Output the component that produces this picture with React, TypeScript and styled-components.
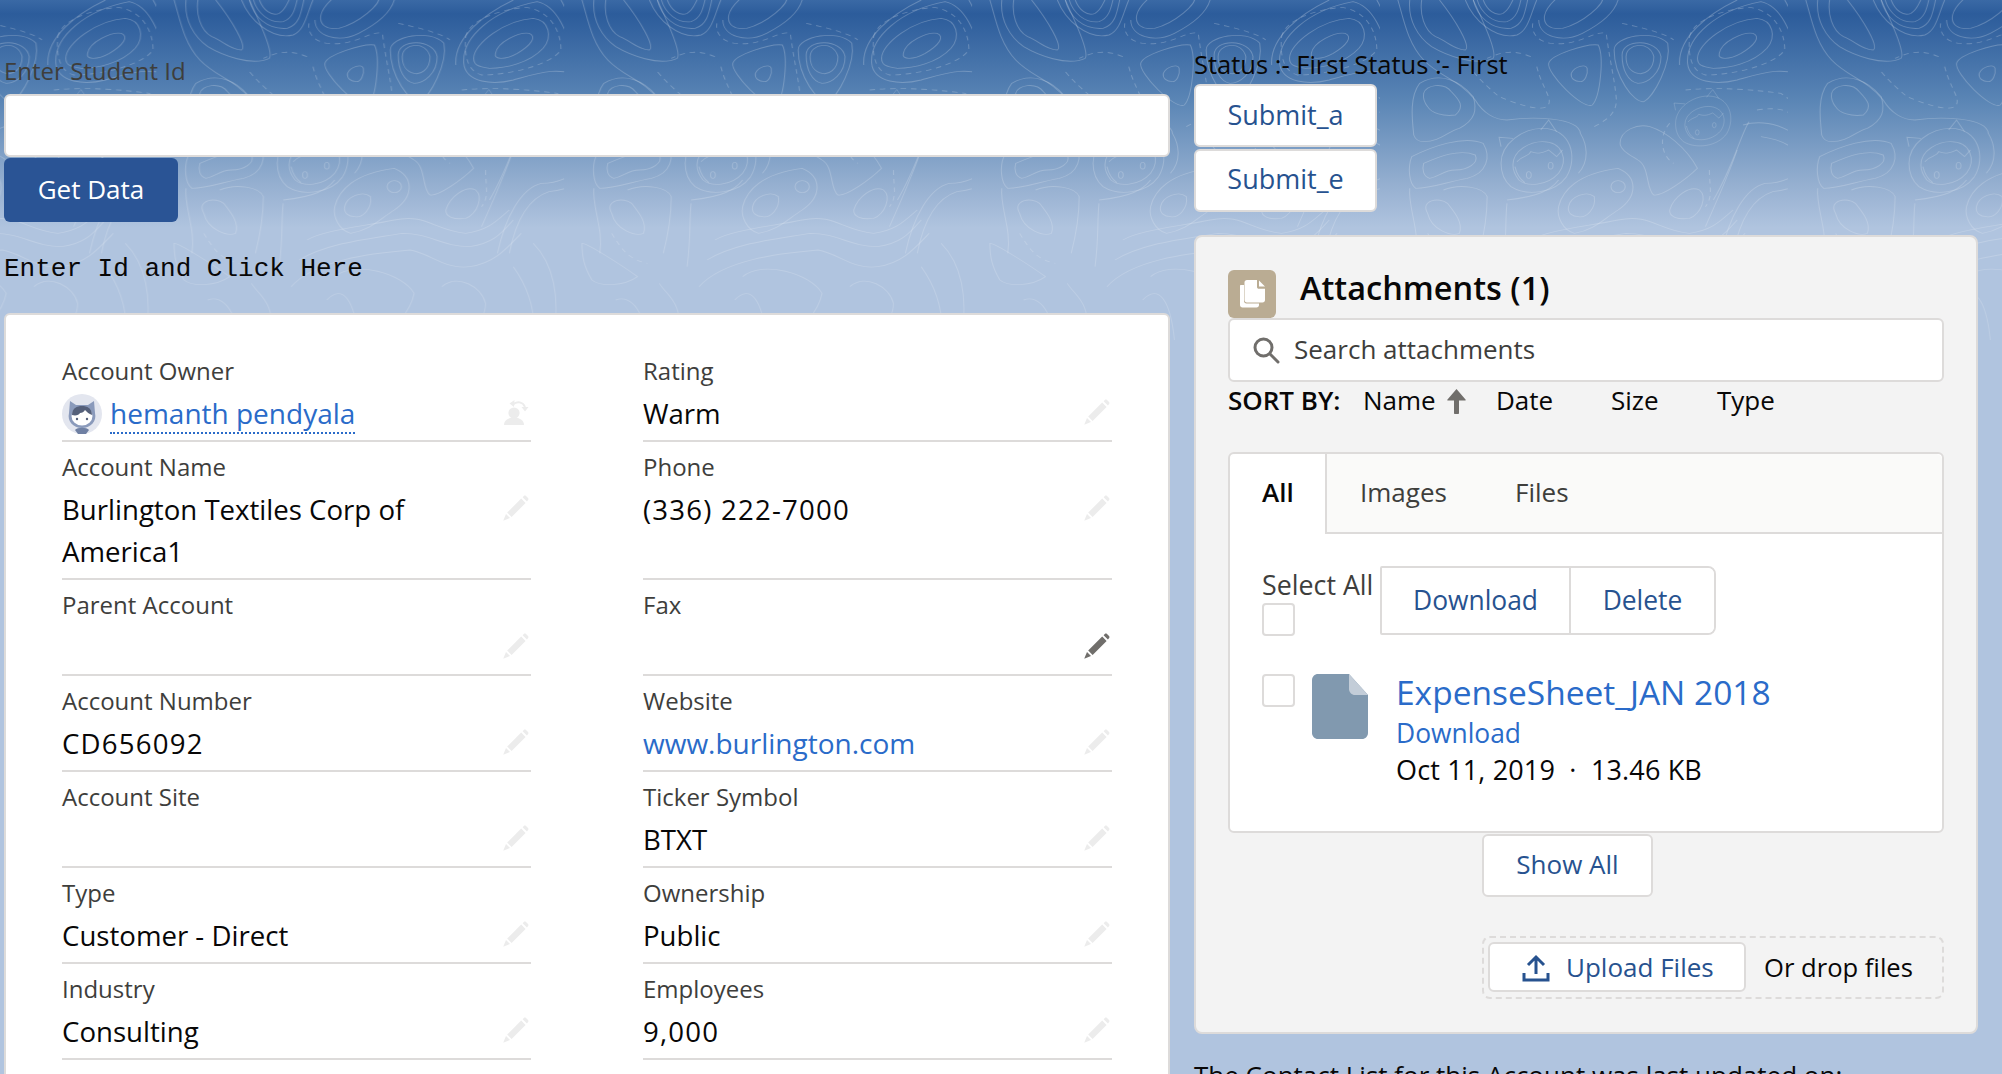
import React from "react";
import styled, { createGlobalStyle } from "styled-components";

const Global = createGlobalStyle`
  html, body { margin: 0; padding: 0; height: 100%; overflow: hidden; background: #b0c4df; }
  body { font-family: "Open Sans", "Noto Sans", sans-serif; color: #080707; }
  * { box-sizing: border-box; }
`;

const Page = styled.div`
  position: relative;
  height: 1074px;
  overflow: hidden;
  background: linear-gradient(#3a69a5 0, #2c5c9b 14px, #5a85b5 100px, #95afd0 184px, #b0c4df 228px);
`;
const Contours = styled.svg`
  position: absolute;
  left: 0;
  top: 0;
  width: 2002px;
  height: 340px;
`;
const Columns = styled.div`
  position: relative;
  display: grid;
  grid-template-columns: 1166px 784px;
  column-gap: 24px;
  padding-left: 4px;
`;
const LeftColumn = styled.section`
  padding-top: 54px;
`;
const RightColumn = styled.section`
  padding-top: 46px;
`;
const FieldLabel = styled.label`
  display: block;
  font-size: 24px;
  line-height: 34px;
  height: 40px;
  color: #3e3e3c;
`;
const TextInput = styled.input`
  display: block;
  width: 100%;
  height: 63px;
  background: #fff;
  border: 2px solid #dddbda;
  border-radius: 6px;
  outline: none;
`;
const BrandButton = styled.button`
  display: block;
  width: 174px;
  height: 64px;
  margin-top: 1px;
  border: 0;
  border-radius: 6px;
  background: #2a5495;
  color: #fff;
  font: 500 26px "Open Sans", sans-serif;
  padding: 0 0 2px;
`;
const MonoNote = styled.div`
  font-family: "Liberation Mono", monospace;
  font-size: 26px;
  line-height: 30px;
  margin-top: 32px;
  color: #080707;
`;
const RecordCard = styled.div`
  margin-top: 29px;
  height: 900px;
  background: #fff;
  border: 2px solid #dddbda;
  border-radius: 6px;
  padding: 31px 0 0 56px;
  display: grid;
  grid-template-columns: 469px 469px;
  column-gap: 112px;
  align-content: start;
`;
const Field = styled.div`
  padding-top: 10px;
  border-bottom: 2px solid #dddbda;
  padding-bottom: 6px;
`;
const Caption = styled.div`
  font-size: 24px;
  line-height: 30px;
  height: 36px;
  color: #3e3e3c;
`;
const ValueRow = styled.div`
  display: flex;
  justify-content: space-between;
  align-items: flex-start;
  min-height: 42px;
  padding-right: 2px;
`;
const Value = styled.div<{ $track?: boolean }>`
  font-size: 27.6px;
  line-height: 42px;
  color: #080707;
  max-width: 420px;
  letter-spacing: ${p => (p.$track ? "1.2px" : "normal")};
`;
const Link = styled.a`
  color: #2a6bc9;
  font-size: 28px;
  line-height: 42px;
`;
const OwnerCell = styled.div`
  display: flex;
  align-items: center;
  gap: 8px;
  height: 40px;
  margin-top: 2px;
`;
const OwnerLink = styled.a`
  color: #2a6bc9;
  font-size: 28px;
  line-height: 37px;
  border-bottom: 2px dotted #2a6bc9;
`;
const EditIcon = styled.svg<{ $active?: boolean }>`
  width: 26px;
  height: 26px;
  margin-top: 7px;
  flex: none;
  fill: ${p => (p.$active ? "#706e6b" : "#ececec")};
`;
const StatusLine = styled.div`
  font-size: 25.5px;
  line-height: 36px;
  height: 38px;
  color: #080707;
`;
const NeutralButton = styled.button`
  display: block;
  background: #fff;
  border: 2px solid #dddbda;
  border-radius: 6px;
  color: #27528f;
  font: 400 26px "Open Sans", sans-serif;
  padding: 0;
`;
const SubmitButton = styled(NeutralButton)`
  width: 183px;
  height: 63px;
  margin-bottom: 1.5px;
  font-size: 27px;
  padding-bottom: 3px;
`;
const Panel = styled.div`
  margin-top: 23px;
  height: 799px;
  background: #f3f3f3;
  border: 2px solid #dddbda;
  border-radius: 8px;
  padding: 33px 32px 0 32px;
  display: flex;
  flex-direction: column;
`;
const PanelHeader = styled.header`
  display: flex;
  height: 48px;
  gap: 24px;
`;
const HeaderIcon = styled.svg`
  width: 48px;
  height: 48px;
  flex: none;
`;
const PanelTitle = styled.h2`
  margin: 0;
  font-size: 32.5px;
  font-weight: 600;
  line-height: 36px;
  color: #080707;
`;
const SearchBox = styled.div`
  height: 64px;
  background: #fff;
  border: 2px solid #dddbda;
  border-radius: 6px;
  display: flex;
  align-items: center;
  padding-left: 22px;
  gap: 14px;
`;
const SearchText = styled.span`
  font-size: 26px;
  color: #3e3e3c;
  position: relative;
  top: -1px;
`;
const SortBar = styled.div`
  height: 39px;
  padding-bottom: 3px;
  display: flex;
  align-items: center;
  font-size: 26px;
  color: #080707;
`;
const SortTitle = styled.span`
  font-weight: 600;
  width: 135px;
`;
const SortItem = styled.span<{ $w: number }>`
  display: flex;
  align-items: center;
  width: ${p => p.$w}px;
`;
const SortArrow = styled.svg`
  width: 19px;
  height: 25px;
  margin-left: 11px;
  margin-top: 4px;
`;
const TabsCard = styled.div`
  margin-top: 31px;
  background: #fff;
  border: 2px solid #dddbda;
  border-radius: 6px;
`;
const TabBar = styled.div`
  display: flex;
  height: 80px;
  background: #fafaf9;
  border-bottom: 2px solid #dddbda;
  border-radius: 6px 6px 0 0;
  font-size: 26px;
`;
const Tab = styled.div<{ $active?: boolean; $w: number; $pad: number }>`
  width: ${p => p.$w}px;
  padding-left: ${p => p.$pad}px;
  line-height: 77px;
  color: ${p => (p.$active ? "#080707" : "#3e3e3c")};
  font-weight: ${p => (p.$active ? 600 : 400)};
  ${p => p.$active && "background:#fff;border-right:2px solid #dddbda;height:80px;border-radius:6px 0 0 0;"}
`;
const TabBody = styled.div`
  padding: 32px 0 42px 32px;
`;
const BulkRow = styled.div`
  display: flex;
  align-items: flex-start;
  gap: 5px;
`;
const SelectAll = styled.div`
  width: 113px;
  font-size: 26.8px;
  line-height: 37px;
  color: #3e3e3c;
  white-space: nowrap;
`;
const Check = styled.input.attrs({ type: "checkbox" })`
  appearance: none;
  display: block;
  margin: 0;
  width: 33px;
  height: 33px;
  background: #fff;
  border: 2px solid #dddbda;
  border-radius: 4px;
  flex: none;
`;
const ButtonGroup = styled.div`
  display: flex;
  height: 69px;
  border: 2px solid #dddbda;
  border-radius: 2px 8px 8px 2px;
`;
const GroupButton = styled.button<{ $w: number }>`
  width: ${p => p.$w}px;
  border: 0;
  background: #fff;
  color: #27528f;
  font: 400 26.4px "Open Sans", sans-serif;
  border-radius: 6px;
  padding: 0;
`;
const GroupDivider = styled.span`
  width: 2px;
  background: #dddbda;
`;
const FileRow = styled.div`
  display: flex;
  align-items: flex-start;
  margin-top: 38px;
`;
const DocIcon = styled.svg`
  width: 56px;
  height: 65px;
  flex: none;
  margin: 0 28px 0 17px;
`;
const FileTitle = styled.a`
  display: block;
  font-size: 33.5px;
  line-height: 37px;
  color: #2a6bc9;
`;
const FileDownload = styled.a`
  display: block;
  font-size: 26.4px;
  line-height: 36px;
  margin-top: 4px;
  color: #2a6bc9;
`;
const FileMeta = styled.div`
  font-size: 27px;
  line-height: 38px;
  color: #080707;
  letter-spacing: 0.15px;
`;
const BottomActions = styled.div`
  width: 462px;
  margin: 1px 0 0 auto;
`;
const ShowAllButton = styled(NeutralButton)`
  width: 171px;
  height: 63px;
  padding-bottom: 2px;
`;
const DropZone = styled.div`
  margin-top: 39px;
  height: 63px;
  border: 2px dashed #dddbda;
  border-radius: 8px;
  display: flex;
  align-items: center;
  padding-left: 4px;
  gap: 18px;
  font-size: 25.6px;
  color: #080707;
`;
const UploadButton = styled(NeutralButton)`
  width: 258px;
  height: 50px;
  display: flex;
  align-items: center;
  padding-left: 32px;
  gap: 16px;
`;
const UploadIcon = styled.svg`
  width: 28px;
  height: 28px;
  flex: none;
  margin-top: 2px;
`;
const UpdatedNote = styled.div`
  margin-top: 23px;
  font-size: 26px;
  line-height: 36px;
  color: #080707;
  white-space: nowrap;
`;

const Pencil = ({ active }: { active?: boolean }) => (
  <EditIcon viewBox="0 0 26 26" $active={active}>
    <path d="M18.2 3.6 22.6 8 8.6 22 4.2 17.6Z" />
    <path d="M19.6 2.2 20.8 1c.7-.6 1.6-.6 2.2 0l2 2c.6.6.6 1.5 0 2.2L23.9 6.6Z" />
    <path d="M3 19 7 23 .8 25.6c-.3.1-.5-.1-.4-.4Z" />
  </EditIcon>
);

const OwnerChange = () => (
  <EditIcon viewBox="0 0 26 26" fill="#ececec">
    <circle cx="11" cy="14" r="5.6" />
    <path d="M1 26c0-4.5 3.5-6 6-7h8c2.500 1 6 2.500 6 7Z" />
    <path d="M10 5.500C14 1.500 20 3 22 8" fill="none" stroke="#ececec" strokeWidth="2" />
    <path d="M11.500 1 11 8 6.500 4.500ZM18.500 8h7L22 12.500Z" />
  </EditIcon>
);

const Avatar = () => (
  <svg width="40" height="40" viewBox="0 0 40 40">
    <circle cx="20" cy="20" r="20" fill="#e3e6ef" />
    <path d="M8 7l6 4h12l6-4 1 12c2 8-4 15-13 15S5 27 7 19Z" fill="#8a9abb" />
    <path d="M13 36c2-3 12-3 14 0l-3 4h-8Z" fill="#6f80a3" />
    <ellipse cx="20" cy="22" rx="10.500" ry="9.500" fill="#fff" />
    <path d="M10 21c0-7 5-9 10-9s10 2 10 9c-3-1-5-3-7-5-1 2-3 3-5 3-1 2-4 3-8 2Z" fill="#55607a" />
    <circle cx="15" cy="25" r="1.200" fill="#55607a" />
    <circle cx="25" cy="25" r="1.200" fill="#55607a" />
  </svg>
);

const Mascot = ({ x, y, s }: { x: number; y: number; s: number }) => (
  <g transform={`translate(${x} ${y}) scale(${s})`}>
    <path d="M-90 0C-90-60-35-105 15-105C85-105 105-20 75 40C45 90-25 100-65 70C-85 50-90 25-90 0Z" />
    <path d="M-60 5C-60-40-15-65 15-65C65-65 80-10 55 30C25 70-25 70-45 50C-55 35-60 20-60 5Z" />
    <path d="M10-100L30-130L50-95M-90-50L-95-78L-60-75" />
    <path d="M-50-5C-35-25-20-20-15-35C5-25 20-35 30-40L50-20L65-40" />
    <path d="M-55 10C-50 35-40 50-30 58" />
    <ellipse cx="-20" cy="35" rx="6" ry="10" />
    <ellipse cx="35" cy="7" rx="6" ry="10" />
  </g>
);

const Topography = () => (
  <Contours viewBox="0 0 2002 340">
    <defs>
      <linearGradient id="fadeGrad" x1="0" y1="0" x2="0" y2="1">
        <stop offset="0" stopColor="#fff" stopOpacity="0.8" />
        <stop offset="1" stopColor="#fff" stopOpacity="0.55" />
      </linearGradient>
      <mask id="fade">
        <rect width="2002" height="340" fill="url(#fadeGrad)" />
      </mask>
      <pattern id="topo" patternUnits="userSpaceOnUse" width="1028" height="1020" patternTransform="translate(1380 0) scale(0.3968 0.3333)">
        <g fill="none" stroke="#fff" strokeOpacity="0.3" strokeWidth="2.6">
          <path d="M855 160C860 125 915 95 940 100C960 110 945 135 910 160C880 180 850 180 855 160Z" />
          <path d="M800 175C800 130 880 60 950 55C990 60 1000 110 975 145C940 190 880 205 840 205C810 200 800 195 800 175Z" />
          <path d="M775 190C770 110 850 30 960 5C1020 20 1040 120 1075 235C1020 195 960 220 900 240C850 255 780 250 775 190Z" />
          <path d="M755 195C750 110 830 40 900 0M1020 0C1050 60 1060 140 1100 210C1130 250 1190 290 1230 320" />
          <path d="M620 170C620 130 680 120 690 170C690 210 665 225 650 220C630 215 620 195 620 170Z" />
          <path d="M610 165C610 115 700 115 708 170C708 220 675 250 650 250C625 245 610 210 610 165Z" />
          <path d="M590 150C590 110 690 85 725 130C735 190 690 290 665 305C640 310 590 230 590 150Z" />
          <path d="M425 190C430 165 520 130 550 135C565 170 555 290 535 315C510 330 420 220 425 190Z" />
          <path d="M482 220C490 200 520 190 522 205C525 225 515 245 505 245C490 245 480 235 482 220Z" />
          <path d="M260 0C270 30 290 50 310 40C325 30 330 10 335 0" />
          <path d="M245 0C255 40 285 70 320 65C345 55 350 25 355 0" />
          <path d="M235 0C245 50 280 90 330 85C360 75 365 40 372 0" />
          <path d="M215 0C235 60 290 120 345 105C375 90 380 40 395 0" />
          <path d="M415 45C420 20 440 0 450-10L560-10C570 10 510 70 460 85C430 90 410 75 415 45Z" />
          <path d="M400 60C400 110 460 130 510 100C560 70 590 40 600 0" />
          <path d="M105 0C100 40 110 90 140 110C170 125 190 150 215 150C230 140 190 60 150 0" />
          <path d="M75 0C70 60 95 110 130 140C165 165 240 200 285 175C295 160 270 90 235 0" />
          <path d="M45 0C60 60 70 130 110 180C150 230 200 240 240 300C260 340 290 360 320 360C380 350 500 350 505 400C520 430 530 480 500 520" />
          <path d="M110 280C115 255 160 245 180 275C200 300 215 320 190 345C160 350 130 340 120 320C110 305 108 295 110 280Z" />
          <path d="M85 405C80 350 75 290 100 250C150 215 200 240 235 290C245 330 240 360 200 385C170 395 150 425 110 425C95 425 88 415 85 405Z" />
          <path d="M605 430C605 390 650 370 680 380C720 395 770 440 800 505C770 540 710 590 690 585C670 570 680 500 650 480C630 465 605 450 605 430Z" />
          <path d="M110 490C150 470 200 445 240 465C250 490 220 510 190 510C160 510 150 530 125 535C110 530 105 510 110 490Z" />
          <path d="M80 470C130 440 210 405 260 430C280 470 270 520 220 535C170 545 130 565 90 565C72 550 70 500 80 470Z" />
          <path d="M960 410C1020 420 1060 450 1060 490C1060 530 1010 550 970 550C920 565 880 650 860 760" />
          <path d="M915 375C1000 345 1090 420 1088 490C1090 540 1040 570 990 575C950 590 910 640 890 760" />
          <path d="M900 450C880 520 850 600 820 680" />
          <path d="M930 365C910 400 890 500 840 600" />
          <circle cx="600" cy="560" r="18" />
          <path d="M475 620C480 590 520 570 540 590C545 625 520 655 500 650C485 650 472 640 475 620Z" />
          <path d="M450 620C460 570 500 520 600 505C650 530 650 590 600 630C560 660 540 690 490 700C460 690 445 650 450 620Z" />
          <path d="M730 630C740 590 780 555 805 570C825 590 810 640 780 655C750 660 728 650 730 630Z" />
          <path d="M120 640C100 600 150 590 170 610C190 640 210 670 200 700C180 710 130 690 120 640Z" />
          <path d="M160 570C200 550 260 560 270 590C270 640 265 690 250 760" />
          <path d="M75 565C70 620 100 690 90 760M320 600C400 590 430 570 450 540M320 610C315 660 320 710 310 800" />
          <path d="M45 730C60 730 150 800 185 830C150 860 90 860 70 840C50 800 45 770 45 730Z" />
          <path d="M380 720C420 690 520 680 600 660C680 640 700 690 780 700C840 690 860 660 890 630" />
          <path d="M360 780C430 730 520 720 620 700C690 700 720 740 790 740C850 730 870 700 900 660" />
          <path d="M340 860C400 780 540 760 640 750C690 760 730 810 790 800C850 790 880 750 920 700" />
          <path d="M950 730C1000 790 1020 890 1000 1020M900 800C930 850 960 920 950 1020" />
          <path d="M450 830C500 780 620 820 650 880C640 940 600 980 560 1020M430 900C470 850 500 900 510 1020" />
          <path d="M720 860C760 820 820 860 830 910C830 960 800 980 780 1020M240 850C260 890 300 900 290 1020M130 900C170 880 210 950 200 1020" />
          <path d="M380 170C330 145 300 160 270 175M395 200C410 270 440 300 420 320C400 335 340 310 300 290C280 270 260 250 235 215M730 370C700 410 710 470 740 490M540 380C570 360 600 340 595 290C590 230 580 190 570 100C540 90 500 140 430 130C400 125 380 100 385 70M950 330C1000 320 1040 330 1040 360M770 270C850 260 950 270 1010 280C1050 310 1060 340 1050 370M610 70C650 80 720 100 740 120M830 510C830 560 840 590 820 620M120 700C150 760 170 780 210 790" strokeDasharray="14 12" />
          <path d="M780 110C790 60 860 30 930 22C990 30 1020 90 1020 150C990 200 880 225 820 225C790 215 775 180 780 110Z" strokeDasharray="14 12" />
          <Mascot x={395} y={490} s={1} />
          <Mascot x={815} y={370} s={0.78} />
        </g>
      </pattern>
    </defs>
    <rect width="2002" height="340" fill="url(#topo)" mask="url(#fade)" />
  </Contours>
);

type Row = { label: string; value?: string; link?: string; active?: boolean; track?: boolean };
const left: Row[] = [
  { label: "Account Name", value: "Burlington Textiles Corp of America1" },
  { label: "Parent Account" },
  { label: "Account Number", value: "CD656092", track: true },
  { label: "Account Site" },
  { label: "Type", value: "Customer - Direct" },
  { label: "Industry", value: "Consulting" },
];
const right: Row[] = [
  { label: "Phone", value: "(336) 222-7000", track: true },
  { label: "Fax", active: true },
  { label: "Website", link: "www.burlington.com" },
  { label: "Ticker Symbol", value: "BTXT" },
  { label: "Ownership", value: "Public" },
  { label: "Employees", value: "9,000", track: true },
];

const Cell = ({ row }: { row: Row }) => (
  <Field>
    <Caption>{row.label}</Caption>
    <ValueRow>
      {row.link ? <Link>{row.link}</Link> : <Value $track={row.track}>{row.value}</Value>}
      <Pencil active={row.active} />
    </ValueRow>
  </Field>
);

export default function App() {
  return (
    <Page>
      <Global />
      <Topography />
      <Columns>
        <LeftColumn>
          <FieldLabel>Enter Student Id</FieldLabel>
          <TextInput />
          <BrandButton>Get Data</BrandButton>
          <MonoNote>Enter Id and Click Here</MonoNote>
          <RecordCard>
            <Field>
              <Caption>Account Owner</Caption>
              <ValueRow>
                <OwnerCell>
                  <Avatar />
                  <OwnerLink>hemanth pendyala</OwnerLink>
                </OwnerCell>
                <OwnerChange />
              </ValueRow>
            </Field>
            <Field>
              <Caption>Rating</Caption>
              <ValueRow>
                <Value>Warm</Value>
                <Pencil />
              </ValueRow>
            </Field>
            {left.map((row, i) => (
              <React.Fragment key={row.label}>
                <Cell row={row} />
                <Cell row={right[i]} />
              </React.Fragment>
            ))}
          </RecordCard>
        </LeftColumn>
        <RightColumn>
          <StatusLine>Status :- First Status :- First</StatusLine>
          <SubmitButton>Submit_a</SubmitButton>
          <SubmitButton>Submit_e</SubmitButton>
          <Panel>
            <PanelHeader>
              <HeaderIcon viewBox="0 0 48 48">
                <rect width="48" height="48" rx="6" fill="#baac93" />
                <path d="M13 15h3v16c0 1.500 1 2.500 2.500 2.500H31v1.500c0 1.500-1 2.500-2.500 2.500h-14c-1.500 0-2.500-1-2.500-2.500V16c0-.6.400-1 1-1Z" fill="#fff" />
                <path d="M19 10h10v7c0 1 .8 1.800 1.800 1.800H37V30c0 1.500-1 2.500-2.500 2.500H19c-1.500 0-2.500-1-2.500-2.500V12.500C16.500 11 17.500 10 19 10ZM31 10.500l6 6h-6Z" fill="#fff" />
              </HeaderIcon>
              <PanelTitle>Attachments (1)</PanelTitle>
            </PanelHeader>
            <SearchBox>
              <svg width="28" height="28" viewBox="0 0 28 28" fill="none" stroke="#706e6b" strokeWidth="3" strokeLinecap="round">
                <circle cx="11.500" cy="11.500" r="8.500" />
                <path d="M18 18l8 8" />
              </svg>
              <SearchText>Search attachments</SearchText>
            </SearchBox>
            <SortBar>
              <SortTitle>SORT BY:</SortTitle>
              <SortItem $w={133}>
                Name
                <SortArrow viewBox="0 0 19 25" fill="#706e6b">
                  <path d="M9.500 0 18.500 10.500C19 11 18.700 11.500 18 11.500H12V24c0 .6-.4 1-1 1H8c-.6 0-1-.4-1-1V11.500H1c-.7 0-1-.5-.5-1Z" />
                </SortArrow>
              </SortItem>
              <SortItem $w={115}>Date</SortItem>
              <SortItem $w={106}>Size</SortItem>
              <SortItem $w={80}>Type</SortItem>
            </SortBar>
            <TabsCard>
              <TabBar>
                <Tab $active $w={97} $pad={32}>All</Tab>
                <Tab $w={155} $pad={33}>Images</Tab>
                <Tab $w={120} $pad={33}>Files</Tab>
              </TabBar>
              <TabBody>
                <BulkRow>
                  <SelectAll>
                    Select All
                    <Check />
                  </SelectAll>
                  <ButtonGroup>
                    <GroupButton $w={187}>Download</GroupButton>
                    <GroupDivider />
                    <GroupButton $w={143}>Delete</GroupButton>
                  </ButtonGroup>
                </BulkRow>
                <FileRow>
                  <Check />
                  <DocIcon viewBox="0 0 56 65">
                    <path d="M6 0H37L56 21V59c0 3.300-2.700 6-6 6H6c-3.300 0-6-2.700-6-6V6C0 2.700 2.700 0 6 0Z" fill="#8199af" />
                    <path d="M37 0 56 21H43c-3.300 0-6-2.700-6-6Z" fill="#c3cdd8" />
                  </DocIcon>
                  <div>
                    <FileTitle>ExpenseSheet_JAN 2018</FileTitle>
                    <FileDownload>Download</FileDownload>
                    <FileMeta>Oct 11, 2019 &nbsp;·&nbsp; 13.46 KB</FileMeta>
                  </div>
                </FileRow>
              </TabBody>
            </TabsCard>
            <BottomActions>
              <ShowAllButton>Show All</ShowAllButton>
              <DropZone>
                <UploadButton>
                  <UploadIcon viewBox="0 0 28 28" fill="none" stroke="#27528f" strokeWidth="3">
                    <path d="M14 20V3M6 11l8-8 8 8" />
                    <path d="M2 19v7h24v-7" />
                  </UploadIcon>
                  Upload Files
                </UploadButton>
                Or drop files
              </DropZone>
            </BottomActions>
          </Panel>
          <UpdatedNote>The Contact List for this Account was last updated on:</UpdatedNote>
        </RightColumn>
      </Columns>
    </Page>
  );
}
